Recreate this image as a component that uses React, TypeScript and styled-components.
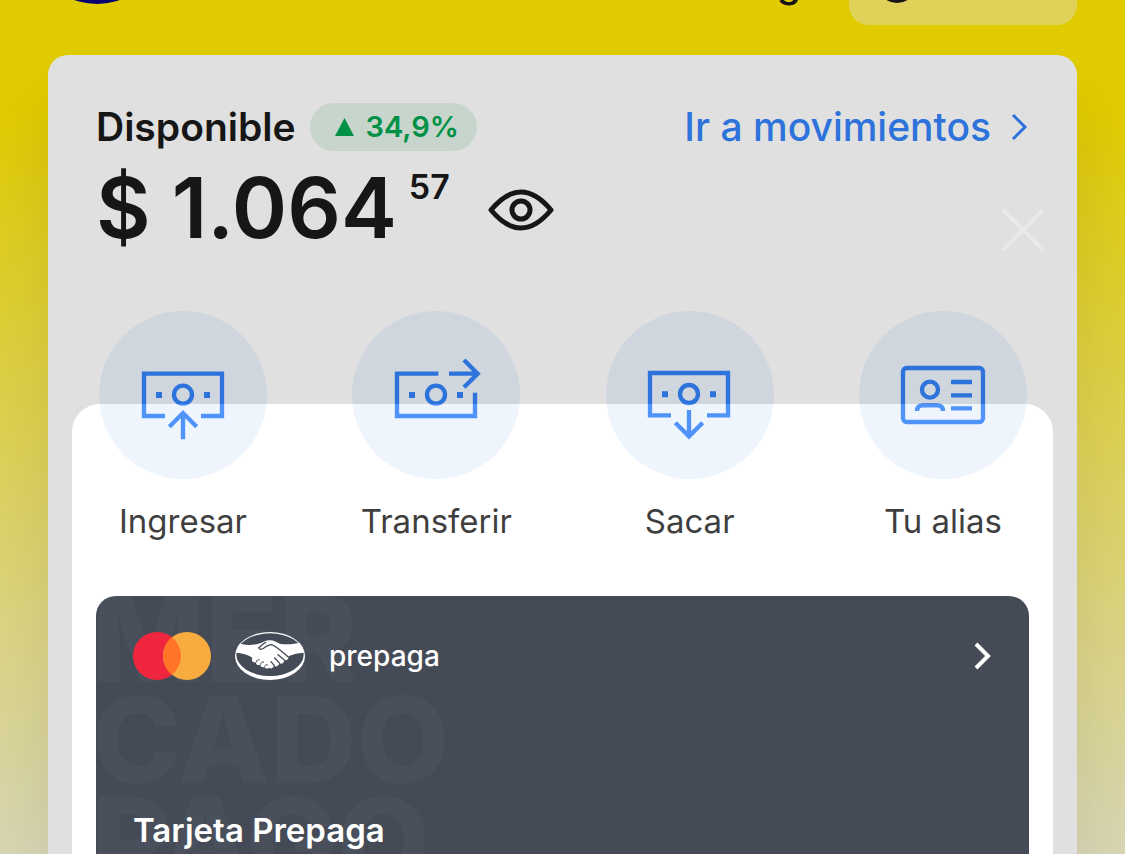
import React from "react";
import styled, { createGlobalStyle } from "styled-components";

const GlobalStyle = createGlobalStyle`
  *, *::before, *::after { box-sizing: border-box; }
  body {
    margin: 0;
    font-family: Inter, "Liberation Sans", sans-serif;
    color: #1a1a1a;
  }
  button { font: inherit; color: inherit; border: 0; padding: 0; background: none; cursor: pointer; }
  svg { display: block; }
`;

const Page = styled.div`
  min-height: 100vh;
  display: flex;
  flex-direction: column;
  overflow: hidden;
  background: linear-gradient(#ffe600 0, #ffe600 100px, #fbec55 400px, #f9f090 610px, #f5f3ce 860px);
`;

const TopBar = styled.header`
  height: 25px;
  padding: 0 48px;
  display: flex;
  align-items: flex-end;
  overflow: hidden;
`;

const BrandButton = styled.button`
  width: 98px;
  height: 25px;
`;

const Greeting = styled.span`
  margin-left: auto;
  margin-right: 48px;
  font-size: 39px;
  line-height: 48px;
  height: 66px;
  font-weight: 500;
`;

const HelpButton = styled.button`
  width: 228px;
  height: 72px;
  flex: none;
  display: flex;
  align-items: flex-start;
  padding-left: 24px;
  border-radius: 20px;
  background: rgba(255, 255, 255, 0.4);
`;

const Account = styled.main`
  position: relative;
  flex: 1;
  display: flex;
  flex-direction: column;
  margin: 30px 48px 0;
  padding: 48px 48px 0;
  border-radius: 20px 20px 0 0;
  background: #fff;
  box-shadow: 0 48px 64px rgba(0, 0, 0, 0.08);
`;

const Spotlight = styled.div`
  position: absolute;
  inset: 349px 24px -40px;
  border-radius: 28px;
  background: rgba(255, 255, 255, 0.14);
  box-shadow: 0 0 0 2000px rgba(0, 0, 0, 0.12);
  pointer-events: none;
`;

const CloseButton = styled.button`
  position: absolute;
  top: 154px;
  right: 33px;
`;

const SummaryRow = styled.div`
  height: 48px;
  display: flex;
  align-items: center;
`;

const Title = styled.h1`
  margin: 0 14px 0 0;
  font-size: 39px;
  line-height: 48px;
  font-weight: 600;
`;

const Yield = styled.span`
  display: flex;
  align-items: center;
  gap: 12px;
  height: 48px;
  padding: 0 18px 0 25px;
  border-radius: 24px;
  background: #e4f3ea;
  color: #00a650;
  font-size: 29px;
  line-height: 48px;
  font-weight: 600;
`;

const MovementsLink = styled.a`
  margin-left: auto;
  display: flex;
  align-items: center;
  gap: 20px;
  color: #3483fa;
  font-size: 39px;
  line-height: 48px;
  font-weight: 500;
  text-decoration: none;
`;

const BalanceRow = styled.div`
  display: flex;
  align-items: flex-start;
  height: 120px;
`;

const Amount = styled.span`
  font-size: 84px;
  line-height: 114px;
  font-weight: 600;
`;

const Cents = styled.span`
  margin-left: 12px;
  padding-top: 16px;
  font-size: 34px;
  line-height: 40px;
  font-weight: 600;
`;

const EyeButton = styled.button`
  margin: 38px 0 0 38px;
`;

const Actions = styled.nav`
  display: flex;
  justify-content: space-between;
  padding: 0 2px 0 3px;
  margin-top: 40px;
`;

const Action = styled.button`
  width: 168px;
  color: #1f1f1f;
  font-size: 33px;
  line-height: 48px;
`;

const ActionIcon = styled.span`
  display: block;
  height: 168px;
  margin-bottom: 18px;
  border-radius: 50%;
  background: #ecf4fd;
  color: #3483fa;
`;

const PrepaidCard = styled.section`
  position: relative;
  z-index: 1;
  flex: 1;
  min-height: 258px;
  margin-top: 51px;
  padding: 36px 37px 0;
  overflow: hidden;
  border-radius: 20px 20px 0 0;
  background: #444a56;
  color: #fff;
`;

const Watermark = styled.div`
  position: absolute;
  top: -8px;
  left: -4px;
  color: rgba(255, 255, 255, 0.035);
  font-size: 120px;
  line-height: 101px;
  font-weight: 800;
`;

const CardHeader = styled.div`
  position: relative;
  display: flex;
  align-items: center;
  gap: 24px;
  height: 48px;
  font-size: 28px;
  font-weight: 500;
`;

const CardLink = styled.button`
  margin-left: auto;
`;

const CardTitle = styled.h2`
  position: relative;
  margin: 126px 0 0;
  font-size: 33px;
  line-height: 48px;
  font-weight: 600;
`;

function Chevron({ stroke }: { stroke: number }) {
  return (
    <svg width="18" height="28" viewBox="0 0 18 28" fill="none" stroke="currentColor" strokeWidth={stroke} aria-hidden="true">
      <path d="M2 2 14 14 2 26" />
    </svg>
  );
}

function Icon({ children }: { children: React.ReactNode }) {
  return (
    <svg width="168" height="168" viewBox="0 0 504 504" fill="none" stroke="currentColor" strokeWidth="13" aria-hidden="true">
      {children}
    </svg>
  );
}

function NoteDetails() {
  return (
    <>
      <circle cx="252" cy="251" r="27" />
      <path d="M171 252h18M315 252h18" strokeWidth="18" />
    </>
  );
}

const actions = [
  {
    label: "Ingresar",
    icon: (
      <Icon>
        <path d="M198 315H135V188H369V315H306" />
        <NoteDetails />
        <path d="M252 385V306M211 347 252 306 293 347" />
      </Icon>
    ),
  },
  {
    label: "Transferir",
    icon: (
      <Icon>
        <path d="M259 188H135V315H369V245" />
        <NoteDetails />
        <path d="M291 188H376M336 147 377 188 336 229" />
      </Icon>
    ),
  },
  {
    label: "Sacar",
    icon: (
      <Icon>
        <g transform="translate(-3 -2)">
          <path d="M198 315H135V188H369V315H306" />
          <NoteDetails />
          <path d="M252 299V377M211 337 252 378 293 337" />
        </g>
      </Icon>
    ),
  },
  {
    label: "Tu alias",
    icon: (
      <Icon>
        <rect x="132" y="171" width="240" height="162" rx="11" />
        <circle cx="213" cy="236" r="24" />
        <path d="M174 300C174 288 181 283 191 283H235C245 283 252 288 252 300" />
        <path d="M276 213h63M276 253h63M276 292h63" />
      </Icon>
    ),
  },
];

function CardBrand() {
  return (
    <svg width="78" height="48" viewBox="0 0 78 48" role="img" aria-label="Mastercard">
      <circle cx="24" cy="24" r="24" fill="#f0263e" />
      <circle cx="54" cy="24" r="24" fill="#f8ab3f" />
      <path d="M39 5.3a24 24 0 0 1 0 37.4a24 24 0 0 1 0-37.4z" fill="#ff7426" />
    </svg>
  );
}

function Handshake() {
  return (
    <svg width="70" height="48" viewBox="0 0 210 144" role="img" aria-label="Mercado Pago">
      <clipPath id="badge">
        <ellipse cx="105" cy="72" rx="105" ry="72" />
      </clipPath>
      <ellipse cx="105" cy="72" rx="105" ry="72" fill="#fff" />
      <ellipse cx="105" cy="68" rx="101" ry="64" fill="#444a56" />
      <path
        clipPath="url(#badge)"
        fill="#fff"
        d="M11 34C32 41 54 41 78 33C88 27 98 23 108 25C118 25 127 34 137 36C160 39 182 35 200 30L207 62C190 63 174 66 160 73C161 82 155 86 148 84C147 94 139 97 133 94C130 104 122 105 117 101C113 110 107 111 103 107C96 112 90 109 88 104C82 108 76 104 76 98C69 101 62 98 63 91C54 93 48 86 52 77C40 68 20 63 3 62Z"
      />
      <g fill="none" stroke="#444a56" strokeWidth="4" strokeLinecap="round" strokeLinejoin="round">
        <path d="M92 31C84 35 77 42 71 48C75 54 84 52 88 47C94 42 102 40 108 38C119 38 144 62 159 74" />
        <path d="M129 68 148 84M119 78 134 94M108 89 118 101" />
        <path d="M64 90C65 84 69 82 73 83M77 97C78 91 82 88 86 90M89 103C91 99 94 97 98 99" strokeWidth="3" />
      </g>
    </svg>
  );
}

export default function App() {
  return (
    <Page>
      <GlobalStyle />
      <TopBar>
        <BrandButton aria-label="Perfil">
          <svg width="98" height="25" viewBox="0 0 98 25" aria-hidden="true">
            <ellipse cx="49" cy="-28" rx="47" ry="32" fill="#0a0080" />
          </svg>
        </BrandButton>
        <Greeting>g</Greeting>
        <HelpButton aria-label="Ayuda">
          <svg width="48" height="50" viewBox="0 0 48 50" fill="none" stroke="#1a1a1a" strokeWidth="4" aria-hidden="true">
            <circle cx="24" cy="30" r="18" />
          </svg>
        </HelpButton>
      </TopBar>
      <Account>
        <SummaryRow>
          <Title>Disponible</Title>
          <Yield>
            <svg width="19" height="18" viewBox="0 0 19 18" fill="currentColor" aria-hidden="true">
              <path d="M9.5 0 19 18H0z" />
            </svg>
            34,9%
          </Yield>
          <MovementsLink href="#movimientos">
            Ir a movimientos
            <Chevron stroke={3} />
          </MovementsLink>
        </SummaryRow>
        <BalanceRow>
          <Amount>$ 1.064</Amount>
          <Cents>57</Cents>
          <EyeButton aria-label="Ocultar saldo">
            <svg width="66" height="42" viewBox="0 0 66 42" fill="none" stroke="#1a1a1a" strokeWidth="5" strokeLinejoin="round" aria-hidden="true">
              <path d="M3 21C13 9 22 3 33 3C44 3 53 9 63 21C53 33 44 39 33 39C22 39 13 33 3 21Z" />
              <circle cx="33" cy="21" r="9" />
            </svg>
          </EyeButton>
        </BalanceRow>
        <Actions>
          {actions.map(({ label, icon }) => (
            <Action key={label}>
              <ActionIcon>{icon}</ActionIcon>
              {label}
            </Action>
          ))}
        </Actions>
        <PrepaidCard>
          <Watermark aria-hidden="true">
            MER
            <br />
            CADO
            <br />
            PAGO
          </Watermark>
          <CardHeader>
            <CardBrand />
            <Handshake />
            prepaga
            <CardLink aria-label="Ver tarjeta">
              <Chevron stroke={4} />
            </CardLink>
          </CardHeader>
          <CardTitle>Tarjeta Prepaga</CardTitle>
        </PrepaidCard>
        <Spotlight />
        <CloseButton aria-label="Cerrar">
          <svg width="42" height="42" viewBox="0 0 42 42" stroke="#e9e9e9" strokeWidth="4" aria-hidden="true">
            <path d="M1 1 41 41M41 1 1 41" />
          </svg>
        </CloseButton>
      </Account>
    </Page>
  );
}
